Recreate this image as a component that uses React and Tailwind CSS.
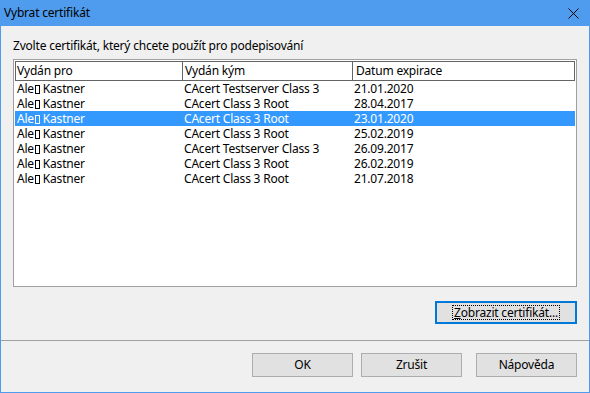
const rows = [
  { issuer: "CAcert Testserver Class 3", date: "21.01.2020" },
  { issuer: "CAcert Class 3 Root", date: "28.04.2017" },
  { issuer: "CAcert Class 3 Root", date: "23.01.2020", selected: true },
  { issuer: "CAcert Class 3 Root", date: "25.02.2019" },
  { issuer: "CAcert Testserver Class 3", date: "26.09.2017" },
  { issuer: "CAcert Class 3 Root", date: "26.02.2019" },
  { issuer: "CAcert Class 3 Root", date: "21.07.2018" },
];

// the missing-glyph box shown instead of "š"
function MissingGlyph() {
  return <span className="inline-block w-[5px] h-[9px] border border-current align-[-1px] ml-[1px]" />;
}

function Button({ children }) {
  return (
    <button className="w-[101px] h-[24px] border border-[#adadad] bg-[#e1e1e1] text-black flex items-center justify-center">
      {children}
    </button>
  );
}

export default function App() {
  return (
    <div
      className="w-[590px] h-[393px] bg-[#4f9cee] flex flex-col px-[1px] pb-[1px] text-[12px] text-black tracking-[-0.2px]"
      style={{ fontFamily: '"Segoe UI", "Noto Sans", sans-serif' }}
    >
      {/* Title bar */}
      <div className="h-[26px] flex items-center justify-between pl-[3px] pr-[10px]">
        <span>Vybrat certifikát</span>
        <svg width="11" height="11" viewBox="0 0 11 11" className="text-black">
          <path d="M0.5 0.5 L10.5 10.5 M10.5 0.5 L0.5 10.5" stroke="currentColor" strokeWidth="1" />
        </svg>
      </div>

      <div className="flex-1 bg-[#f0f0f0] flex flex-col">
        <div className="px-[12px] pt-[12px] flex flex-col">
          <div className="h-[15px] leading-[15px]">
            Zvolte certifikát, který chcete použít pro podepisování
          </div>

          {/* List */}
          <div className="mt-[6px] h-[228px] border border-[#a0a0a0] bg-white p-[1px] flex flex-col">
            <div className="h-[20px] border border-[#646464] flex leading-[18px]">
              <div className="w-[167px] border-r border-[#646464] pl-[1px]">Vydán pro</div>
              <div className="w-[170px] border-r border-[#646464] pl-[2px]">Vydán kým</div>
              <div className="flex-1 pl-[3px]">Datum expirace</div>
            </div>
            {rows.map((r, i) => (
              <div
                key={i}
                className={
                  "h-[15px] leading-[15px] flex overflow-hidden " +
                  (r.selected ? "bg-[#3399ff] text-white" : "")
                }
              >
                <div className="w-[168px] pl-[2px]">
                  Ale<MissingGlyph /> Kastner
                </div>
                <div className="w-[170px] pl-[1px]">{r.issuer}</div>
                <div className="flex-1 pl-[1px]">{r.date}</div>
              </div>
            ))}
          </div>

          <button className="self-end mt-[14px] w-[142px] h-[23px] border-2 border-[#0078d7] bg-[#e1e1e1] flex items-center justify-center">
            <span className="border border-dotted border-black px-[1px] leading-[13px]">
              <span className="underline">Z</span>obrazit certifikát...
            </span>
          </button>
        </div>

        <div className="mt-[16px] h-[1px] bg-[#a0a0a0]" />

        <div className="mt-[12px] flex justify-end pr-[12px]">
          <Button>OK</Button>
          <div className="w-[8px]" />
          <Button>Zrušit</Button>
          <div className="w-[14px]" />
          <Button>Nápověda</Button>
        </div>
      </div>
    </div>
  );
}
